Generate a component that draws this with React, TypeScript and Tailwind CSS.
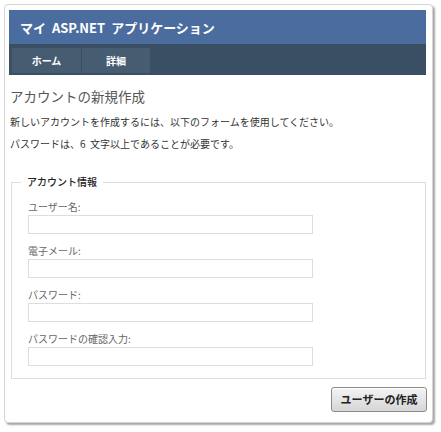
import React from "react";

const fields = ["ユーザー名:", "電子メール:", "パスワード:", "パスワードの確認入力:"];

export default function App() {
  return (
    <div
      className="w-[441px] h-[432px] bg-white pt-[4px] pl-[4px]"
      style={{ fontFamily: '"Noto Sans CJK JP", "Noto Sans", sans-serif' }}
    >
      <div className="w-[429px] h-[419px] bg-white border border-[#d4d4d4] rounded-[4px] shadow-[2px_2px_2px_rgba(0,0,0,0.35)] flex flex-col">
        <div className="ml-[4px] mt-[5px] w-[417px]">
          <div className="h-[34px] bg-[#4b6c9e] flex items-center pl-[11px] text-white font-bold text-[13px] leading-none">
            <span>マイ&nbsp;&nbsp;ASP.NET&nbsp;&nbsp;アプリケーション</span>
          </div>
          <div className="h-[31px] bg-[#3a4f63] flex gap-[1px] pt-[4px] pl-[3px]">
            <div className="w-[69px] h-[25px] bg-[#465c71] text-white font-bold text-[10px] flex items-center justify-center">
              ホーム
            </div>
            <div className="w-[68px] h-[25px] bg-[#465c71] text-white font-bold text-[10px] flex items-center justify-center">
              詳細
            </div>
          </div>
        </div>
        <div className="pl-[5px] pr-[5px]">
          <h2 className="text-[13.5px] text-[#555] leading-[20px] mt-[11px]">アカウントの新規作成</h2>
          <p className="text-[10px] text-[#333] leading-[14px] mt-[9px]">
            新しいアカウントを作成するには、以下のフォームを使用してください。
          </p>
          <p className="text-[10px] text-[#333] leading-[14px] mt-[8px]">
            パスワードは、6&nbsp;&nbsp;文字以上であることが必要です。
          </p>
          <fieldset className="ml-[1px] mt-[24px] w-[415px] border border-[#ddd] px-[16px] pb-[12px]">
            <legend className="ml-[-7px] px-[6px] text-[10px] leading-[14px] text-[#222] font-medium">
              アカウント情報
            </legend>
            <div className="flex flex-col gap-[10px] mt-[11px]">
              {fields.map((f) => (
                <div key={f} className="flex flex-col">
                  <label className="text-[10px] leading-[14px] text-[#666]">{f}</label>
                  <input
                    type="text"
                    className="mt-[1px] w-[285px] h-[19px] border border-[#ddd] bg-white outline-none"
                  />
                </div>
              ))}
            </div>
          </fieldset>
          <div className="flex justify-end mt-[8px] pr-[0px]">
            <button className="w-[96px] h-[25px] rounded-[3px] border border-[#8a8a8a] bg-gradient-to-b from-[#f4f4f4] to-[#d6d6d6] text-[11px] font-bold text-[#222] shadow-[inset_0_1px_0_#fff]">
              ユーザーの作成
            </button>
          </div>
        </div>
      </div>
    </div>
  );
}
